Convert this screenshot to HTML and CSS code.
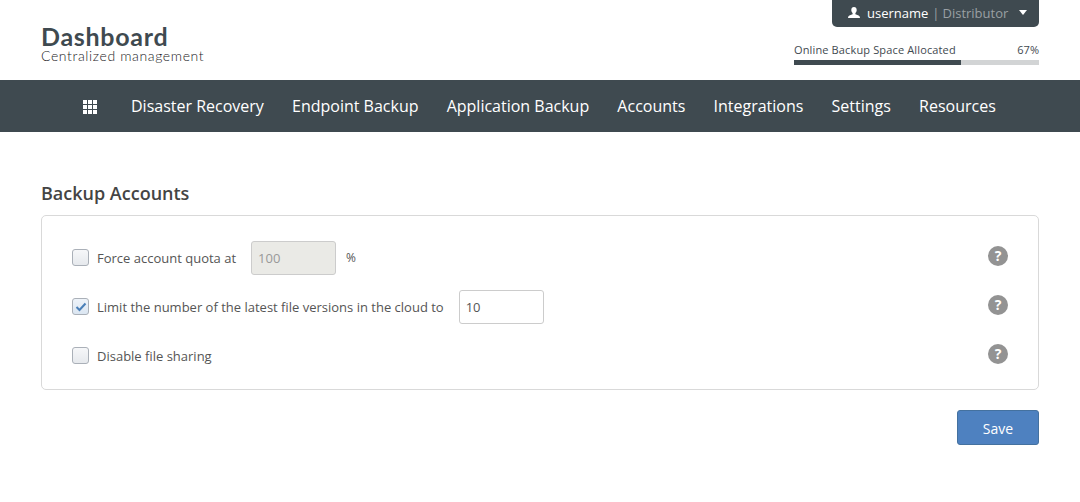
FILE: index.html
```html
<!DOCTYPE html>
<html lang="en">
<head>
<meta charset="utf-8">
<title>Backup Accounts</title>
<link rel="stylesheet" href="styles.css">
</head>
<body>
<header class="top">
  <div class="brand">
    <div class="brand-title">Dashboard</div>
    <div class="brand-sub">Centralized management</div>
  </div>
  <div class="top-right">
    <div class="user">
      <svg class="user-icon" width="12" height="12" viewBox="0 0 12 12"><path fill="#fff" d="M6 0c1.7 0 2.7 1.200 2.700 3 0 1.300-.6 2.500-1.300 3.100v1.200c.5.400 3.300.9 4.100 1.900.3.400.4 1 .5 1.800H0c.1-.8.200-1.400.5-1.800.8-1 3.600-1.500 4.100-1.900V6.100C3.900 5.500 3.300 4.300 3.300 3 3.300 1.200 4.300 0 6 0z"/></svg>
      <span class="user-name">username</span>
      <span class="user-sep">|</span>
      <span class="user-role">Distributor</span>
      <span class="caret"></span>
    </div>
    <div class="quota">
      <div class="quota-labels"><span class="quota-name">Online Backup Space Allocated</span><span>67%</span></div>
      <div class="quota-track"><div class="quota-fill"></div></div>
    </div>
  </div>
</header>
<nav class="nav">
  <svg class="grid-icon" width="14" height="14" viewBox="0 0 14 14"><path fill="#fff" d="M0 0h4v4H0zM5 0h4v4H5zM10 0h4v4h-4zM0 5h4v4H0zM5 5h4v4H5zM10 5h4v4h-4zM0 10h4v4H0zM5 10h4v4H5zM10 10h4v4h-4z"/></svg>
  <a class="nav-item">Disaster Recovery</a>
  <a class="nav-item">Endpoint Backup</a>
  <a class="nav-item">Application Backup</a>
  <a class="nav-item">Accounts</a>
  <a class="nav-item">Integrations</a>
  <a class="nav-item">Settings</a>
  <a class="nav-item">Resources</a>
</nav>
<main class="content">
  <h1 class="title">Backup Accounts</h1>
  <section class="panel">
    <div class="row">
      <span class="check"></span>
      <span class="label">Force account quota at</span>
      <span class="field field-disabled">100</span>
      <span class="unit">%</span>
      <span class="help">?</span>
    </div>
    <div class="row">
      <span class="check check-on"><svg width="12" height="10" viewBox="0 0 12 10"><path fill="none" stroke="#4a7fb8" stroke-width="2" d="M1.500 5l3 3 6-6.500"/></svg></span>
      <span class="label">Limit the number of the latest file versions in the cloud to</span>
      <span class="field">10</span>
      <span class="help">?</span>
    </div>
    <div class="row">
      <span class="check"></span>
      <span class="label">Disable file sharing</span>
      <span class="help">?</span>
    </div>
  </section>
  <div class="actions"><button class="save">Save</button></div>
</main>
</body>
</html>
```

FILE: styles.css
```css
* { box-sizing: border-box; }
html, body { margin: 0; padding: 0; background: #fff; }
body { font-family: "Open Sans", "Liberation Sans", sans-serif; color: #555; height: 502px; overflow: hidden; }

.top { height: 80px; padding: 0 41px; display: flex; justify-content: space-between; }
.brand { padding-top: 24px; color: #3f4a50; font-family: "Lato", sans-serif; }
.brand-title { font-size: 25px; font-weight: 700; line-height: 25px; letter-spacing: .72px; }
.brand-sub { font-size: 14px; font-weight: 300; line-height: 14px; letter-spacing: .62px; color: #1c2326; }
.top-right { width: 245px; display: flex; flex-direction: column; align-items: flex-end; }
.user { width: 207px; height: 27px; background: #3f4a50; border-radius: 0 0 5px 5px; display: flex; align-items: center; padding: 0 0 2px 16px; font-size: 13px; }
.user-icon { margin-right: 7px; margin-top: 1px; }
.user-name { color: #fff; }
.user-sep { color: #9aa0a4; margin-left: 4px; }
.user-role { color: #9aa0a4; margin-left: 3px; }
.caret { width: 0; height: 0; margin-left: 11px; border-left: 4px solid transparent; border-right: 4px solid transparent; border-top: 5px solid #fff; }
.quota { width: 245px; margin-top: 15px; }
.quota-labels { display: flex; justify-content: space-between; font-size: 11px; line-height: 16px; color: #3f4a50; }
.quota-name { letter-spacing: .14px; }
.quota-track { height: 5px; margin-top: 2px; background: #d2d4d5; }
.quota-fill { height: 100%; width: 68.200%; background: #3f4a50; }

.nav { height: 52px; background: #3f4a50; display: flex; align-items: center; padding-left: 83px; }
.grid-icon { margin-right: 34px; margin-top: 2px; }
.nav-item { color: #fff; font-size: 16px; margin-right: 28.150px; }

.content { padding: 0 41px; }
.title { margin: 49px 0 0; font-size: 18px; line-height: 24px; font-weight: 600; color: #444; }
.panel { margin-top: 10px; height: 175px; border: 1px solid #d9d9d9; border-radius: 5px; padding: 17px 30px 0; }
.row { height: 49px; display: flex; align-items: center; font-size: 13px; }
.check { width: 17px; height: 17px; flex: none; border: 1px solid #aab0b8; border-radius: 3px; background: linear-gradient(#f6f7f9, #e6e9ed); margin-right: 8px; display: flex; align-items: center; justify-content: center; }
.check-on { background: linear-gradient(#eef3f9, #dbe6f2); }
.label { color: #555; }
.field { height: 34px; display: flex; align-items: center; border: 1px solid #ccc; border-radius: 3px; padding: 0 6px; width: 85px; margin-left: 15px; color: #555; font-size: 13px; }
.field-disabled { background: #eaeae6; color: #999; }
.unit { margin-left: 10px; font-size: 12px; color: #555; }
.help { margin-left: auto; margin-bottom: 4px; width: 20px; height: 20px; border-radius: 50%; background: #939393; color: #fff; font-size: 14px; font-weight: 700; display: flex; align-items: center; justify-content: center; }
.actions { display: flex; justify-content: flex-end; margin-top: 20px; }
.save { width: 82px; height: 35px; background: #4e81c0; border: 1px solid #44719f; border-radius: 3px; color: #fff; font-family: inherit; font-size: 14px; padding: 2px 0 0; }
```
